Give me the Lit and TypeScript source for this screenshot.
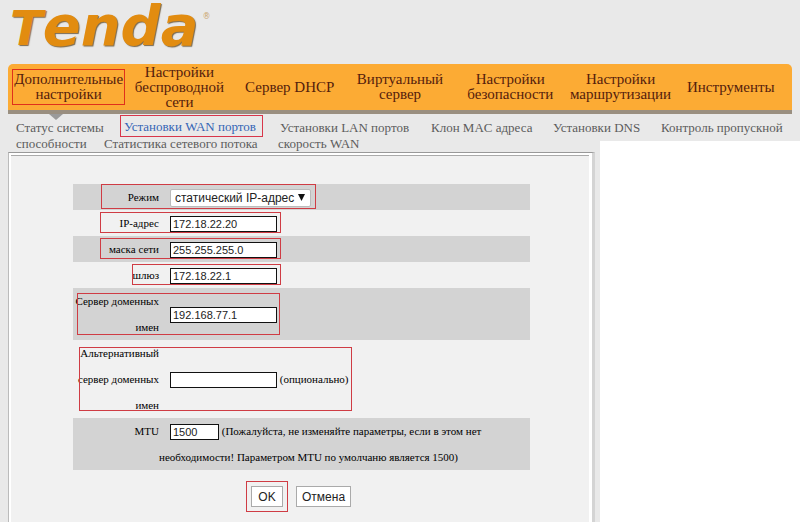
import { LitElement, html, css, nothing } from "lit";
import { customElement } from "lit/decorators.js";

const SECTIONS = [
  "Дополнительные настройки",
  "Настройки беспроводной сети",
  "Сервер DHCP",
  "Виртуальный сервер",
  "Настройки безопасности",
  "Настройки маршрутизации",
  "Инструменты",
];

const PAGES = [
  "Статус системы",
  "Установки WAN портов",
  "Установки LAN портов",
  "Клон MAC адреса",
  "Установки DNS",
  "Контроль пропускной",
];

const MORE_PAGES = ["способности", "Статистика сетевого потока", "скорость WAN"];

@customElement("app-root")
export class AppRoot extends LitElement {
  static styles = css`
    :host {
      display: block;
      min-height: 100vh;
      background: #fff;
      font-family: "Liberation Serif", serif;
      color: #222;
    }
    * {
      box-sizing: border-box;
    }
    .page {
      display: flex;
      flex-direction: column;
      min-height: 100vh;
    }
    a {
      color: inherit;
      text-decoration: none;
    }
    .head {
      background: #e9e9e9;
      padding: 0 8px;
    }
    .logo {
      height: 64px;
      line-height: 52px;
      padding-left: 2px;
      font-family: "DejaVu Sans", sans-serif;
      font-weight: bold;
      font-style: italic;
      font-size: 56px;
      color: #e28c10;
      text-shadow: 1px 1px 1px #7a6a50;
      display: flex;
      align-items: baseline;
    }
    .cap {
      font-size: 48px;
    }
    .reg {
      align-self: flex-start;
      padding-left: 4px;
      font-size: 8px;
      line-height: 34px;
      font-weight: normal;
      font-style: normal;
      color: #c9a56c;
      text-shadow: none;
    }
    .nav {
      display: grid;
      grid-template-columns: repeat(7, 1fr);
      align-items: center;
      height: 50px;
      padding: 0 6px;
      background: #fcab34;
      border-bottom: 4px solid #9a8f80;
      border-radius: 5px 5px 0 0;
      font-size: 15px;
      line-height: 15px;
      text-align: center;
      color: #54200c;
    }
    .nav a {
      margin: 0 -4px;
      padding: 0 4px;
    }
    .nav .current {
      margin: 0 0 0 -1px;
      padding: 2px 0;
      outline: 1px solid #e0301c;
    }
    .sub {
      position: relative;
      display: grid;
      grid-template-columns: 108fr 156fr 151fr 122fr 108fr 131fr;
      height: 27px;
      padding-left: 8px;
      font-size: 13px;
      line-height: 28px;
      white-space: nowrap;
      color: #5c5c5c;
    }
    .sub::before {
      content: "";
      position: absolute;
      left: 41px;
      top: 0;
      border: 7px solid transparent;
      border-top: 6px solid #9a9a9a;
      border-bottom: 0;
    }
    .sub .current {
      justify-self: start;
      align-self: start;
      margin: 2px 0 0 -3px;
      padding: 2px 6px 0 3px;
      line-height: 18px;
      color: #3565b5;
      outline: 1px solid #d8364a;
    }
    .body {
      flex: 1;
      display: flex;
      flex-direction: column;
      width: 75%;
      background: #e9e9e9;
      padding: 0 5px 0 8px;
    }
    .sub2 {
      display: grid;
      grid-template-columns: 88fr 174fr 317fr;
      height: 11px;
      padding-left: 8px;
      font-size: 13px;
      line-height: 6px;
      white-space: nowrap;
      color: #5c5c5c;
    }
    .panel {
      flex: 1;
      display: flex;
      border: 1px solid #999;
      border-width: 1px 3px 0 1px;
      border-right-color: #d4d4d4;
      border-left-color: #bbb;
      background: #fff;
      padding: 2px 3px 0 2px;
    }
    .inner {
      flex: 1;
      background: #f1f1f1;
      border-top: 1px solid #aaa;
      padding: 28px 59px 0 62px;
    }
    .row {
      position: relative;
      display: grid;
      grid-template-columns: 86px 1fr;
      align-items: center;
      font-size: 11px;
      line-height: 26px;
      color: #000;
    }
    .row:nth-child(odd) {
      background: #d3d3d3;
    }
    .label {
      text-align: right;
    }
    .value {
      text-indent: 11px;
    }
    input,
    select,
    button {
      font-family: "Liberation Sans", sans-serif;
      font-size: 12px;
      color: #222;
      background: #fff;
      text-indent: 0;
    }
    input {
      width: 107px;
      height: 16px;
      padding: 0 2px;
      border: 1px solid #111;
      border-radius: 0;
      vertical-align: middle;
      font-size: 11px;
    }
    .short {
      width: 49px;
    }
    .pick {
      position: relative;
      display: inline-block;
      width: 141px;
      height: 18px;
      line-height: 18px;
      vertical-align: middle;
      text-indent: 0;
    }
    select {
      display: block;
      width: 100%;
      height: 18px;
      padding: 0 4px;
      border: 1px solid #bbb;
      border-radius: 2px;
      appearance: none;
    }
    .arrow {
      position: absolute;
      right: 6px;
      top: 5px;
      width: 7px;
      height: 7px;
      pointer-events: none;
    }
    .mark {
      position: absolute;
      border: 1px solid #cf3c44;
      pointer-events: none;
    }
    .m-mode { left: 28px; top: 0; width: 215px; height: 25px; }
    .m-ip { left: 27px; top: 2px; width: 181px; height: 21px; }
    .m-gate { left: 59px; top: 2px; width: 149px; height: 21px; }
    .m-dns { left: 4px; top: 5px; width: 203px; height: 42px; }
    .m-alt { left: 6px; top: 7px; width: 273px; height: 64px; }
    .actions {
      display: flex;
      align-items: center;
      gap: 8px;
      margin: 11px 0 0 173px;
    }
    .ring {
      display: flex;
      padding: 4px;
      border: 1px solid #cf3c44;
    }
    button {
      height: 21px;
      min-width: 32px;
      padding: 0 5px;
      border: 1px solid #aaa;
      font-size: 12px;
      line-height: 18px;
    }
  `;

  private field(id: string, label: unknown, value: string, mark: string, note: unknown = "", short = false) {
    return html`
      <div class="row">
        <label class="label" for=${id}>${label}</label>
        <div class="value">
          <input id=${id} class=${short ? "short" : ""} type="text" .value=${value} />
          ${note}
        </div>
        ${mark ? html`<span class="mark ${mark}"></span>` : nothing}
      </div>
    `;
  }

  render() {
    return html`
      <div class="page">
        <header class="head">
          <div class="logo"><span class="cap">T</span><span>enda</span><span class="reg">®</span></div>
          <nav class="nav">
            ${SECTIONS.map((s, i) => html`<a href="#" class=${i === 0 ? "current" : ""}>${s}</a>`)}
          </nav>
          <nav class="sub">
            ${PAGES.map((s, i) => html`<a href="#" class=${i === 1 ? "current" : ""}>${s}</a>`)}
          </nav>
        </header>
        <main class="body">
          <nav class="sub2">${MORE_PAGES.map((s) => html`<a href="#">${s}</a>`)}</nav>
          <div class="panel">
            <form class="inner" @submit=${(e: Event) => e.preventDefault()}>
              <div class="rows">
                <div class="row">
                  <label class="label" for="mode">Режим</label>
                  <div class="value">
                    <span class="pick">
                      <select id="mode">
                        <option>статический IP-адрес</option>
                      </select>
                      <svg class="arrow" viewBox="0 0 7 7"><path d="M0 0H7L3.5 7Z" fill="#111" /></svg>
                    </span>
                  </div>
                  <span class="mark m-mode"></span>
                </div>
                ${this.field("ip", "IP-адрес", "172.18.22.20", "m-ip")}
                ${this.field("mask", "маска сети", "255.255.255.0", "m-ip")}
                ${this.field("gate", "шлюз", "172.18.22.1", "m-gate")}
                ${this.field("dns", html`Сервер доменных<br />имен`, "192.168.77.1", "m-dns")}
                ${this.field("alt", html`Альтернативный<br />сервер доменных<br />имен`, "", "m-alt", "(опционально)")}
                ${this.field(
                  "mtu",
                  html`MTU<br />&nbsp;`,
                  "1500",
                  "",
                  html`(Пожалуйста, не изменяйте параметры, если в этом нет<br />
                    необходимости! Параметром MTU по умолчаню является 1500)`,
                  true
                )}
              </div>
              <div class="actions">
                <span class="ring"><button type="submit">OK</button></span>
                <button type="reset">Отмена</button>
              </div>
            </form>
          </div>
        </main>
      </div>
    `;
  }
}
